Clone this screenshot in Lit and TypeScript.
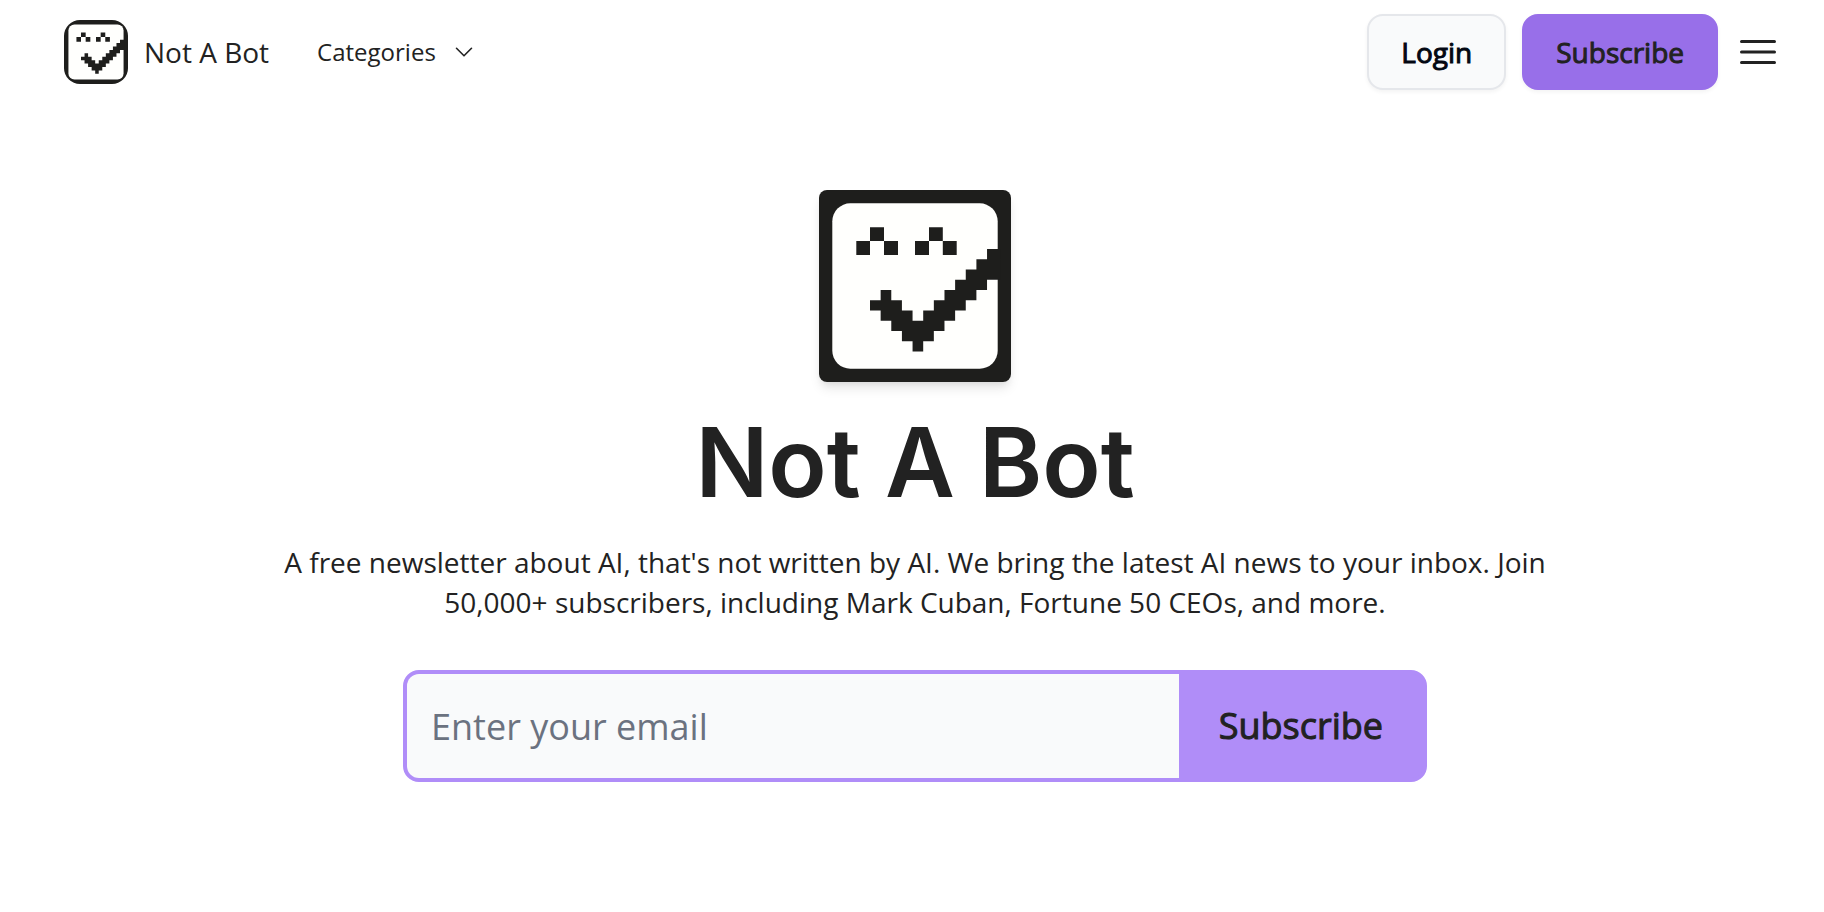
import { LitElement, html, css, svg } from "lit";
import { customElement } from "lit/decorators.js";

// Pixel-art face: two eyes and a check-mark smile that runs into the frame.
const face = svg`
  <rect width="192" height="192" fill="#1e1e1c" />
  <rect x="13.3" y="13.3" width="165.4" height="165.4" rx="18" fill="#fffffd" />
  <g fill="#1e1e1c">
    <path d="M51 37.3H65V51H79V65H65V51H51V65H37.3V51H51Z" />
    <path d="M110 37.3H123.8V51H137.7V65H123.8V51H110V65H96V51H110Z" />
    <path
      transform="translate(51 59) scale(10.64 10.24)"
      d="M12.3 0H11V1H10V2H9V3H8V4H7V5H6V6H5V7H4V6H3V5H2V4H1V5H0V6H1V7H2V8H3V9H4V10H5V9H6V8H7V7H8V6H9V5H10V4H11V3H12.3Z"
    />
  </g>
`;

@customElement("nab-logo")
class NabLogo extends LitElement {
  static styles = css`
    :host { display: block; overflow: hidden; flex: none; }
    .art { display: block; width: 100%; height: 100%; }
  `;
  render() {
    return html`<svg class="art" viewBox="0 0 192 192" role="img" aria-label="Not A Bot logo">${face}</svg>`;
  }
}

@customElement("app-root")
class AppRoot extends LitElement {
  static styles = css`
    :host {
      display: block;
      min-height: 100vh;
      background: #fff;
      color: #222;
      font-family: "Open Sans", sans-serif;
      font-size: 28px;
      line-height: 40px;
    }
    * { box-sizing: border-box; }
    a { color: inherit; text-decoration: none; }
    button, input { font: inherit; color: inherit; margin: 0; }
    button { cursor: pointer; }
    .header {
      display: flex;
      align-items: center;
      justify-content: space-between;
      padding: 14px 46px 14px 64px;
    }
    .left, .brand, .actions, .categories { display: flex; align-items: center; }
    .left { gap: 48px; }
    .brand { gap: 16px; }
    .brand-logo { width: 64px; height: 64px; border-radius: 16px; }
    .categories {
      gap: 16px;
      padding: 0;
      border: 0;
      background: none;
      font-size: 24px;
    }
    .chevron { width: 24px; height: 24px; }
    .actions { gap: 16px; }
    .btn {
      padding: 16px 32px;
      border: 2px solid #986fe9;
      border-radius: 16px;
      background: #986fe9;
      box-shadow: 0 2px 4px rgba(0, 0, 0, 0.05);
      -webkit-text-stroke: 1px currentColor;
    }
    .login { color: #030712; background: #f9fafb; border-color: #e5e7eb; }
    .menu { display: flex; padding: 0; border: 0; background: none; margin-left: 4px; }
    .menu-icon { width: 40px; height: 40px; }
    .hero {
      display: flex;
      flex-direction: column;
      align-items: center;
      padding: 86px 58px 64px 64px;
      text-align: center;
    }
    .hero-logo {
      width: 192px;
      height: 192px;
      border-radius: 8px;
    }
    .hero-art {
      border-radius: 8px;
      box-shadow: 0 8px 12px -2px rgba(0, 0, 0, 0.1), 0 4px 8px -4px rgba(0, 0, 0, 0.1);
    }
    .title {
      margin: 32px 0;
      font-family: Inter, sans-serif;
      font-size: 96px;
      line-height: 96px;
      font-weight: 600;
    }
    .lead { margin: 0; max-width: 1280px; }
    .form {
      display: flex;
      width: 100%;
      max-width: 1024px;
      margin-top: 48px;
      border: 4px solid #b08df8;
      border-radius: 16px;
      background: #b08df8;
      overflow: hidden;
      font-size: 36px;
      line-height: 56px;
    }
    .field { flex: 1; min-width: 0; display: flex; }
    .email {
      width: 100%;
      height: 104px;
      padding: 24px;
      border: 0;
      border-radius: 0;
      outline: 0;
      background: #f9fafb;
    }
    .email::placeholder { color: #6b7280; opacity: 1; }
    .join {
      padding: 24px 40px;
      border: 0;
      background: #b08df8;
      -webkit-text-stroke: 1px currentColor;
    }
  `;

  render() {
    return html`
      <header class="header">
        <nav class="left">
          <a class="brand" href="#"><nab-logo class="brand-logo"></nab-logo><span>Not A Bot</span></a>
          <button class="categories" type="button">
            Categories
            <svg class="chevron" viewBox="0 0 24 24" fill="none" stroke="currentColor" stroke-width="1.6" stroke-linecap="round" stroke-linejoin="round" aria-hidden="true">
              <path d="M4.5 8.3L12 15.8L19.5 8.3" />
            </svg>
          </button>
        </nav>
        <div class="actions">
          <button class="btn login" type="button">Login</button>
          <button class="btn" type="button">Subscribe</button>
          <button class="menu" type="button" aria-label="Menu">
            <svg class="menu-icon" viewBox="0 0 40 40" fill="none" stroke="currentColor" stroke-width="3" stroke-linecap="round" aria-hidden="true">
              <path d="M3.5 9.5H36.5M3.5 20H36.5M3.5 30.5H36.5" />
            </svg>
          </button>
        </div>
      </header>
      <main class="hero">
        <div class="hero-art"><nab-logo class="hero-logo"></nab-logo></div>
        <h1 class="title">Not A Bot</h1>
        <p class="lead">
          A free newsletter about AI, that's not written by AI. We bring the latest AI news to your inbox. Join
          50,000+ subscribers, including Mark Cuban, Fortune 50 CEOs, and more.
        </p>
        <form class="form" @submit=${(e: Event) => e.preventDefault()}>
          <label class="field" for="email">
            <input class="email" id="email" type="email" placeholder="Enter your email" aria-label="Enter your email" />
          </label>
          <button class="join" type="submit">Subscribe</button>
        </form>
      </main>
    `;
  }
}
